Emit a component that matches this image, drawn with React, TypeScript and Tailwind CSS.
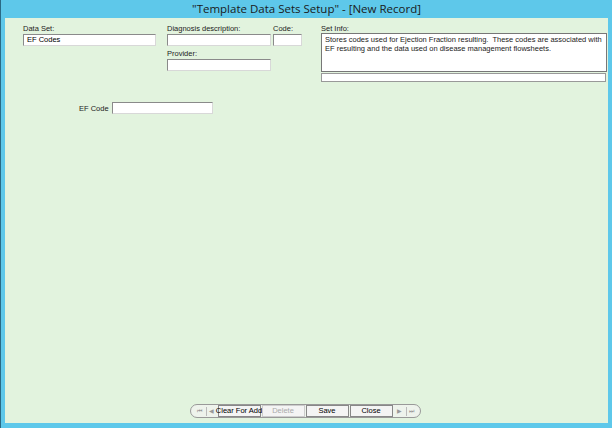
export default function App() {
  const inp = "h-[12px] bg-white border border-[#8a8a8a] border-b-[#d8d8d8] border-r-[#d8d8d8]";
  const lbl = "text-[7.5px] leading-[9px] text-[#222]";
  const btn = "h-[12px] border border-[#888] bg-[#f4f4f4] text-[7.5px] leading-[10px] whitespace-nowrap flex items-center justify-center";
  return (
    <div className="w-[612px] h-[428px] bg-[#5ec8ea] border-l border-[#2a6a85] flex flex-col" style={{ fontFamily: '"Liberation Sans", Arial, sans-serif' }}>
      <div className="h-[18px] flex items-center justify-center text-[11.5px] text-[#1a1a1a]" style={{ fontFamily: '"Open Sans", sans-serif' }}>
        "Template Data Sets Setup" - [New Record]
      </div>
      <div className="flex-1 mx-[4px] mb-[5px] bg-[#e2f3de] flex flex-col relative">
        <div className="flex pt-[6px]">
          <div className="ml-[18px] w-[133px] flex flex-col gap-[1px]">
            <div className={lbl}>Data Set:</div>
            <div className={inp + " w-[133px] text-[7.5px] leading-[10px] px-[3px]"}>EF Codes</div>
          </div>
          <div className="ml-[11px] flex flex-col">
            <div className="flex gap-[2px]">
              <div className="flex flex-col gap-[1px]">
                <div className={lbl}>Diagnosis description:</div>
                <div className={inp + " w-[104px]"} />
              </div>
              <div className="flex flex-col gap-[1px]">
                <div className={lbl}>Code:</div>
                <div className={inp + " w-[29px]"} />
              </div>
            </div>
            <div className="flex flex-col gap-[1px] mt-[3px]">
              <div className={lbl}>Provider:</div>
              <div className={inp + " w-[104px] h-[11px]"} />
            </div>
          </div>
          <div className="ml-[19px] flex flex-col">
            <div className={lbl}>Set Info:</div>
            <div className="w-[286px] h-[39px] bg-white border border-[#777] text-[7.5px] leading-[9px] px-[3px] pt-[1px] text-[#222]">
              Stores codes used for Ejection Fraction resulting.&nbsp; These codes are associated with EF resulting and the data used on disease management flowsheets.
            </div>
            <div className="mt-[1px] w-[285px] h-[9px] bg-white border border-[#999]" />
          </div>
        </div>
        <div className="flex items-center mt-[20px] ml-[74px] gap-[3px]">
          <div className={lbl}>EF Code</div>
          <div className={inp + " w-[101px] h-[11px]"} />
        </div>
        <div className="flex-1" />
        <div className="flex justify-center mb-[5px] ml-[-3px]">
          <div className="h-[14px] flex items-center border border-[#999] rounded-full px-[3px] gap-[1px] bg-[#eef3ec]">
            <div className="w-[11px] text-[6px] text-[#999] text-center">⏮</div>
            <div className="w-[11px] text-[6px] text-[#999] text-center border-l border-[#bbb]">◀</div>
            <div className={btn + " w-[43px]"}>Clear For Add</div>
            <div className={btn + " w-[43px] text-[#aaa] border-[#ccc]"}>Delete</div>
            <div className={btn + " w-[43px]"}>Save</div>
            <div className={btn + " w-[43px] border-[#333]"}>Close</div>
            <div className="w-[11px] text-[6px] text-[#999] text-center">▶</div>
            <div className="w-[11px] text-[6px] text-[#999] text-center border-l border-[#bbb]">⏭</div>
          </div>
        </div>
      </div>
    </div>
  );
}
